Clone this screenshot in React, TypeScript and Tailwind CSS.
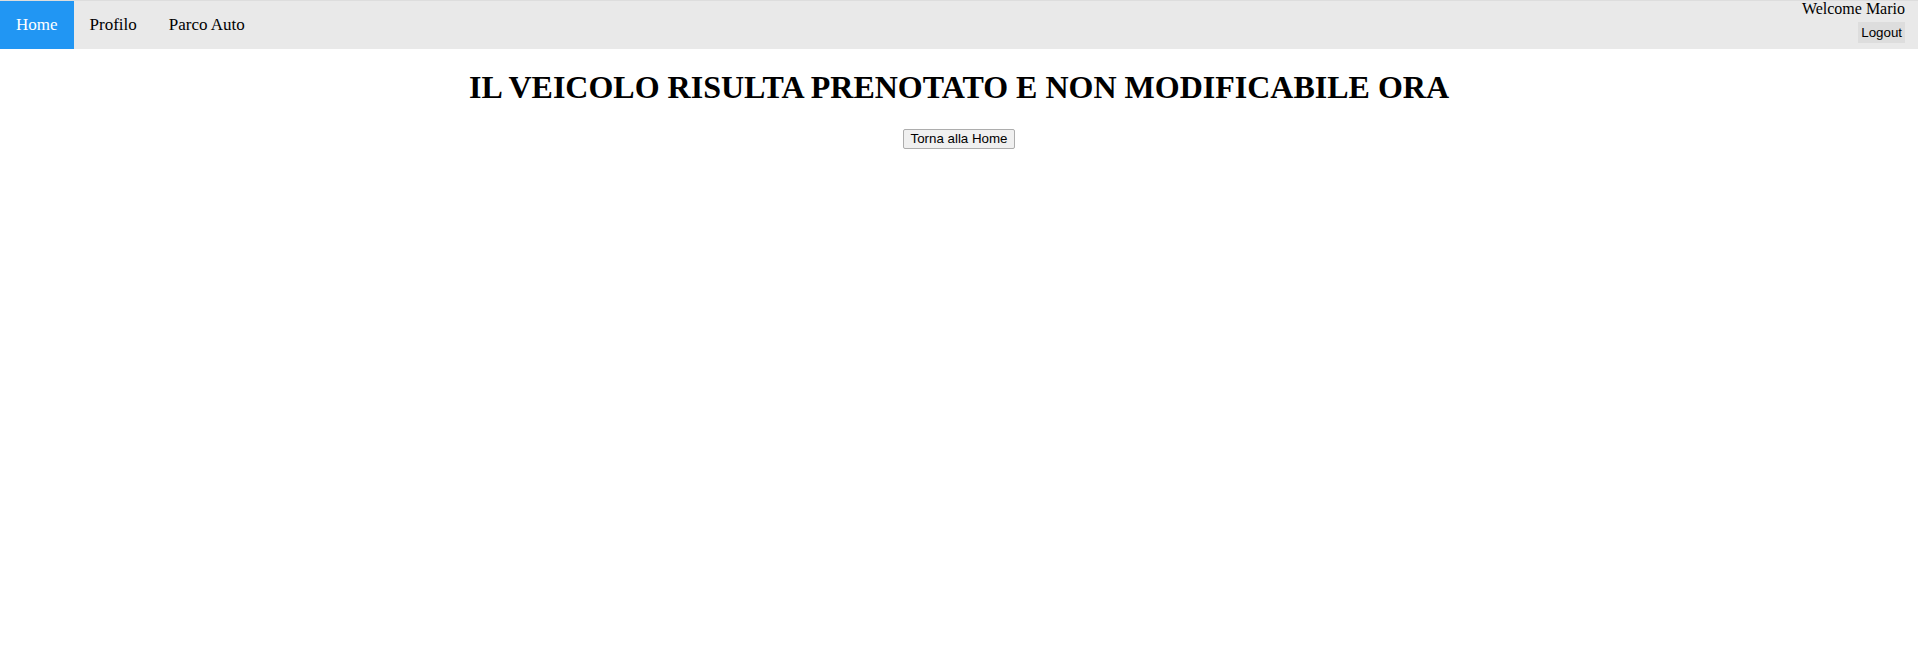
import React from "react";

export default function App() {
  return (
    <div className="min-h-[648px] bg-white font-['Liberation_Serif',serif] text-black">
      <nav className="flex h-[49px] items-stretch border-t border-[#dddddd] bg-[#e9e9e9]">
        <a className="flex items-center bg-[#2196F3] px-[16px] text-[17px] text-white" href="#">
          Home
        </a>
        <a className="flex items-center px-[16px] text-[17px] text-black" href="#">
          Profilo
        </a>
        <a className="flex items-center px-[16px] text-[17px] text-black" href="#">
          Parco Auto
        </a>
        <div className="ml-auto flex flex-col items-end pr-[13px]">
          <span className="mt-[-2px] text-[16px] leading-[20px]">Welcome Mario</span>
          <button className="mt-[3px] h-[21px] bg-[#dddddd] px-[3px] font-['Liberation_Sans',sans-serif] text-[13.33px] leading-[21px]">
            Logout
          </button>
        </div>
      </nav>
      <h1 className="mt-[20px] text-center text-[32px] font-bold leading-[37px]">
        IL VEICOLO RISULTA PRENOTATO E NON MODIFICABILE ORA
      </h1>
      <div className="mt-[23px] flex justify-center">
        <button className="h-[20px] rounded-[2px] border border-[#adadad] bg-[#f0f0f0] px-[6px] font-['Liberation_Sans',sans-serif] text-[13.33px] leading-[16px]">
          Torna alla Home
        </button>
      </div>
    </div>
  );
}
